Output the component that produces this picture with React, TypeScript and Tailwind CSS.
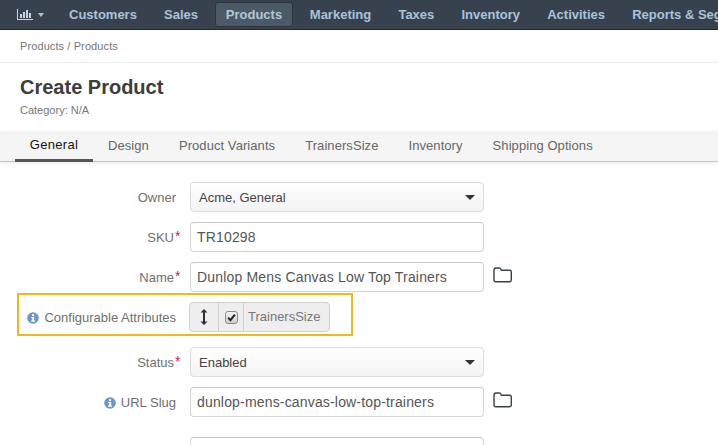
import React from "react";

const Star = () => <span className="absolute left-full top-[-2px] text-[#c7254e] text-[14px] leading-5 ml-[1px]">*</span>;

const Info = () => (
  <svg viewBox="0 0 12 12" className="w-[12px] h-[12px] shrink-0">
    <circle cx="6" cy="6" r="5.8" fill="#6e96c8" />
    <rect x="5" y="2.2" width="2.1" height="1.9" fill="#fff" />
    <path d="M4.2 5h2.9v3.6h1v1.1H4.2V8.6h1V6.1h-1z" fill="#fff" />
  </svg>
);

const Folder = () => (
  <svg viewBox="0 0 20 16" className="w-[20px] h-[16px] mb-[4px] ml-[9px]" fill="none" stroke="#3a4048" strokeWidth="1.4">
    <path d="M1 3.2C1 1.8 1.7 1 3 1h3.2c1 0 1.5.6 1.9 1.6l.3.7h8.3c1 0 1.6.7 1.6 1.7v8c0 1-.6 1.7-1.6 1.7H2.7c-1 0-1.7-.7-1.7-1.7z" />
  </svg>
);

const Caret = () => <span className="w-0 h-0 border-l-[5px] border-r-[5px] border-t-[5px] border-l-transparent border-r-transparent border-t-[#333]" />;

const Label = ({ text, star, info }: { text: string; star?: boolean; info?: boolean }) => (
  <div className="w-[176px] shrink-0 flex justify-end items-center gap-[5px] pt-[1px] text-[13px] text-[#6f6f6f]">
    {info && <Info />}
    <span className={star ? "relative mr-[2px]" : ""}>
      {text}
      {star && <Star />}
    </span>
  </div>
);

const Select = ({ value }: { value: string }) => (
  <div className="ml-[14px] w-[294px] h-[30px] rounded-[4px] border border-[#dcdcdc] bg-linear-to-b from-white to-[#f3f3f3] flex items-center justify-between px-[8px] text-[13px] text-[#444]">
    <span className="pt-[1px]">{value}</span>
    <Caret />
  </div>
);

const Input = ({ value }: { value: string }) => (
  <div className="ml-[14px] w-[294px] h-[30px] rounded-[4px] border border-[#d4d4d4] border-t-[#c8c8c8] bg-white flex items-center pl-[6px] text-[14px] tracking-[0.17px] text-[#555]">{value}</div>
);

const tabs = ["General", "Design", "Product Variants", "TrainersSize", "Inventory", "Shipping Options"];
const nav = ["Customers", "Sales", "Products", "Marketing", "Taxes", "Inventory", "Activities", "Reports & Segments"];

export default function App() {
  return (
    <div className="w-[718px] h-[445px] overflow-hidden bg-white font-['Liberation_Sans',Arial,sans-serif]">
      <nav className="h-[30px] bg-[#37424e] border-b border-[#1f262d] flex items-center pl-[17px] whitespace-nowrap">
        <div className="flex items-center gap-[5px] w-[42px] shrink-0">
          <svg viewBox="0 0 16 13" className="w-[16px] h-[13px]" fill="#c3d6e8">
            <path d="M0 1h1v10h15v1H0z" />
            <path d="M3 6h2v4H3zM6 4h2v6H6zM9 2h2v8H9zM12 5h2v5h-2z" />
          </svg>
          <span className="w-0 h-0 border-l-[3.5px] border-r-[3.5px] border-t-[4px] border-l-transparent border-r-transparent border-t-[#a9c3dc]" />
        </div>
        <div className="flex items-center gap-[7.2px] text-[13px] font-bold text-[#a9c3dc]">
          {nav.map((n) =>
            n === "Products" ? (
              <span key={n} className="h-[25px] px-[9.5px] flex items-center rounded-[3px] bg-[#4c5966] border border-[#2b343d] text-[#b4c6d8]">{n}</span>
            ) : (
              <span key={n} className="px-[10px]">{n}</span>
            )
          )}
        </div>
      </nav>

      <div className="h-[33px] border-b border-[#f0f0f0] flex items-center pl-[20px] text-[11px] tracking-[0.1px] text-[#777]">
        Products&nbsp;/&nbsp;Products
      </div>

      <div className="h-[68px] pl-[20px] pt-[11px]">
        <h1 className="text-[20px] leading-[26px] font-bold text-[#3d3d3d]">Create Product</h1>
        <div className="text-[11px] leading-[14px] text-[#777] mt-[3px]">Category: N/A</div>
      </div>

      <div className="h-[31px] bg-[#f5f5f5] border-b border-[#c4c4c4] shadow-[0_2px_3px_rgba(0,0,0,0.06)] flex pl-[15px] text-[13px] tracking-[0.07px] text-[#666]">
        {tabs.map((t, i) => (
          <div key={t} className={i === 0 ? "h-[31px] w-[78px] flex items-center justify-center tracking-[0.3px] text-[#111] border-b-[3px] border-[#555]" : "h-[30px] px-[15px] flex items-center"}>
            {t}
          </div>
        ))}
      </div>

      <div className="pt-[20px] flex flex-col">
        <div className="flex items-center h-[30px]">
          <Label text="Owner" />
          <Select value="Acme, General" />
        </div>
        <div className="flex items-center h-[30px] mt-[10px]">
          <Label text="SKU" star />
          <Input value="TR10298" />
        </div>
        <div className="flex items-center h-[30px] mt-[10px]">
          <Label text="Name" star />
          <Input value="Dunlop Mens Canvas Low Top Trainers" />
          <Folder />
        </div>
        <div className="mt-[1px] ml-[17px] w-[336px] h-[43px] border-2 border-[#f0b91c] flex items-center">
          <div className="w-[157px] mt-[6px] shrink-0 flex justify-end items-center gap-[5px] text-[13px] text-[#6f6f6f] whitespace-nowrap">
            <Info />
            <span>Configurable Attributes</span>
          </div>
          <div className="ml-[13px] mt-[5px] h-[30px] flex items-stretch rounded-[4px] border border-[#d0d0d0] bg-[#eeeeee]">
            <div className="w-[29px] flex items-center justify-center border-r border-[#cfcfcf]">
              <svg viewBox="0 0 8 16" className="w-[8px] h-[16px]" fill="#2f2f3a">
                <path d="M4 0l3.5 3.6H5v8.8h2.5L4 16 .5 12.4H3V3.6H.5z" />
              </svg>
            </div>
            <div className="w-[25px] flex items-center justify-center border-r border-[#cfcfcf]">
              <span className="w-[13px] h-[13px] rounded-[3px] border border-[#8a8a8a] bg-linear-to-b from-[#f4f4f4] to-[#cfcfcf] flex items-center justify-center">
                <svg viewBox="0 0 10 10" className="w-[9px] h-[9px]" fill="none" stroke="#222" strokeWidth="2.2">
                  <path d="M1.3 5.2L3.8 8 8.8 1.8" />
                </svg>
              </span>
            </div>
            <div className="pl-[4px] pr-[9px] flex items-center text-[13px] text-[#777] pb-[1px]">TrainersSize</div>
          </div>
        </div>
        <div className="flex items-center h-[30px] mt-[11px]">
          <Label text="Status" star />
          <Select value="Enabled" />
        </div>
        <div className="flex items-center h-[30px] mt-[10px]">
          <Label text="URL Slug" info />
          <Input value="dunlop-mens-canvas-low-top-trainers" />
          <Folder />
        </div>
        <div className="flex items-center h-[30px] mt-[20px]">
          <div className="w-[176px] shrink-0" />
          <Input value="" />
        </div>
      </div>
    </div>
  );
}
